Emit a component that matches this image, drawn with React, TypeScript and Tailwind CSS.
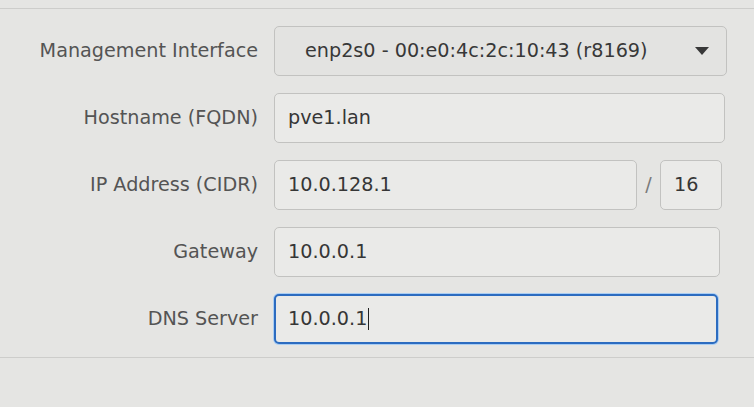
import { ReactNode } from 'react';

// Network config form from the installer (GTK look)
function Row({ label, children }: { label: string; children: ReactNode }) {
  return (
    <div className="grid grid-cols-[258px_1fr] gap-4 h-[50px] items-center">
      <span className="text-right text-[#545454]">{label}</span>
      <div className="h-full flex items-center">{children}</div>
    </div>
  );
}

function Entry({ value, focused, className = '' }: { value: string; focused?: boolean; className?: string }) {
  return (
    <div
      className={
        'h-full flex items-center rounded-[5px] bg-[#eaeae8] text-[#363636] ' +
        (focused
          ? 'border-2 border-[#2c6cc0] shadow-[0_0_0_1px_#a9cdf3] pl-[12px] '
          : 'border border-[#c2c2c0] pl-[13px] ') +
        className
      }
    >
      <span>{value}</span>
      {focused && <span className="w-px h-[22px] bg-[#222] ml-[1px]" />}
    </div>
  );
}

export default function App() {
  return (
    <div
      className="w-full h-[407px] bg-[#e5e5e3] text-[19.2px] leading-none overflow-hidden"
      style={{ fontFamily: '"DejaVu Sans", Verdana, sans-serif' }}
    >
      <div className="h-[8px]" />
      <div className="border-t border-[#cdcdcb]" />

      <div className="flex flex-col gap-[17px] pt-[17px]">
        <Row label="Management Interface">
          <div className="w-full mr-[27px] h-full flex items-center rounded-[5px] bg-[#e3e3e1] border border-[#c2c2c0] text-[#383838] pl-[30px] pr-[17px]">
            <span className="flex-1">enp2s0 - 00:e0:4c:2c:10:43 (r8169)</span>
            <svg width="14" height="8" viewBox="0 0 14 8">
              <path d="M0 0h14L7 8z" fill="#383838" />
            </svg>
          </div>
        </Row>

        <Row label="Hostname (FQDN)">
          <Entry value="pve1.lan" className="w-full mr-[29px]" />
        </Row>

        <Row label="IP Address (CIDR)">
          <div className="w-full h-full flex items-center mr-[32px]">
            <Entry value="10.0.128.1" className="flex-1" />
            <span className="w-[23px] text-center text-[#7a7a7a]">/</span>
            <Entry value="16" className="w-[62px]" />
          </div>
        </Row>

        <Row label="Gateway">
          <Entry value="10.0.0.1" className="w-full mr-[34px]" />
        </Row>

        <Row label="DNS Server">
          <Entry value="10.0.0.1" focused className="w-full mr-[36px]" />
        </Row>
      </div>

      <div className="mt-[13px] border-t border-[#cdcdcb]" />
    </div>
  );
}
